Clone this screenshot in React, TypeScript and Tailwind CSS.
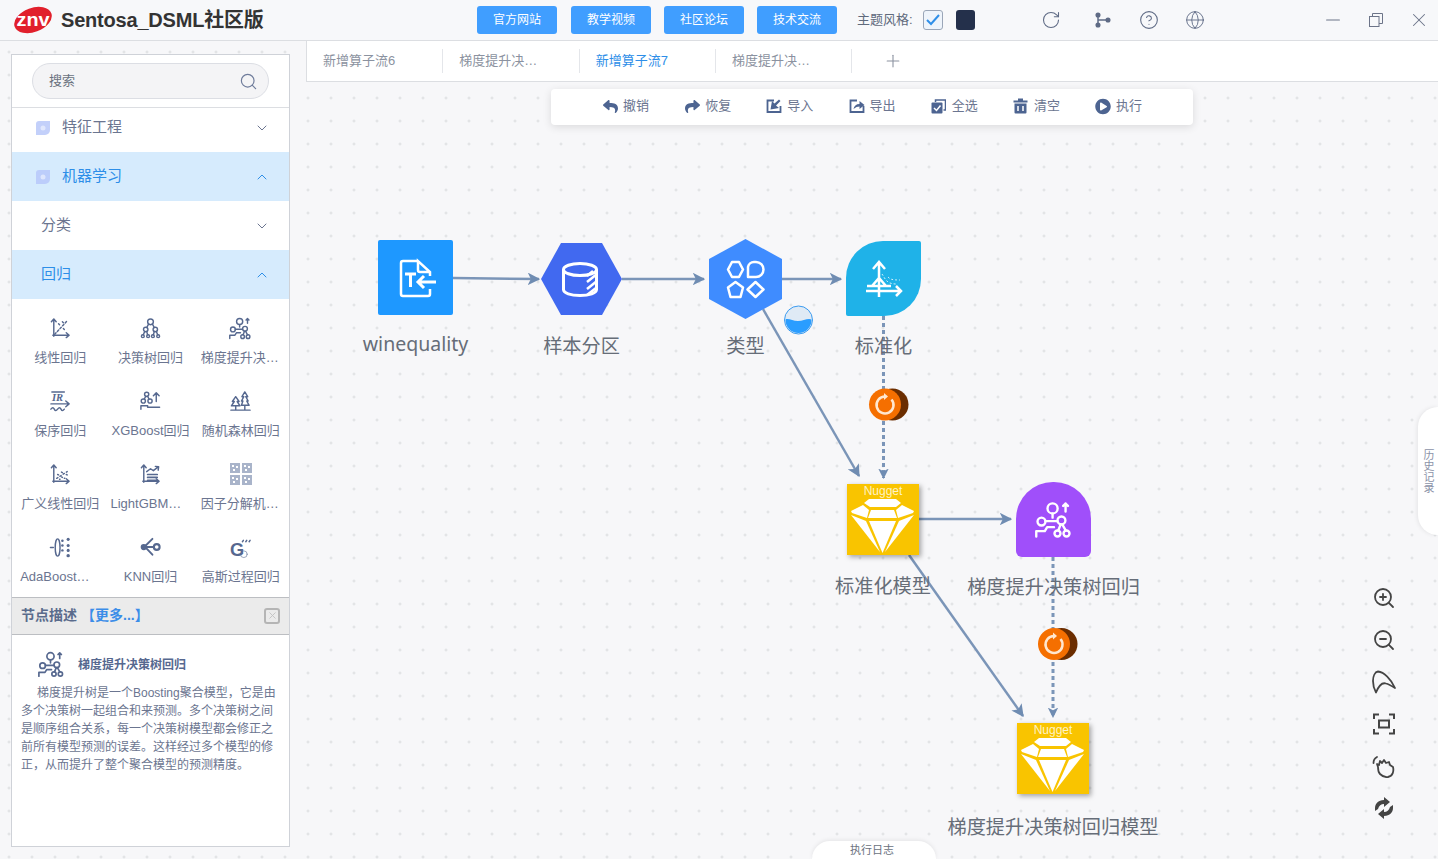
import type { ReactNode } from "react";
import { ChevronDown, ChevronUp, CircleHelp, Globe, Minus, Plus, RotateCw, Search, X, ZoomIn, ZoomOut } from "lucide-react";
import { FaPlayCircle, FaReply, FaShare } from "react-icons/fa";

function Glyph({ children, size = 24 }: { children: ReactNode; size?: number }) {
    return (
        <svg width={size} height={size} viewBox="0 0 24 24" fill="none" stroke="currentColor" strokeWidth="1.5" strokeLinecap="round" strokeLinejoin="round">
            {children}
        </svg>
    );
}

const Axes = () => <path d="M5 2v18M2.500 5 5 2l2.500 3M4 19h17M18 16.500l3 2.500-3 2.500" />;

const GbdtPaths = () => (
    <>
        <circle cx="11.100" cy="4.700" r="3.200" />
        <circle cx="4.100" cy="13" r="2.500" />
        <circle cx="16.700" cy="12.300" r="2.500" />
        <circle cx="14.200" cy="20.500" r="1.900" />
        <circle cx="19.900" cy="20.500" r="1.900" />
        <path d="M6.600 12.700h7.600M11.100 8v2.500M16.200 14.800l-1.500 3.800M17.200 14.800l2.200 3.800M19.300 6.600V1.600M17.800 3.100l1.500-1.500 1.500 1.500M.8 22.400v-3.400h5.400l1.500-2.500H12" />
    </>
);

const gridIcons: Record<string, ReactNode> = {
    linear: (
        <>
            <Axes />
            <path d="M6 18 19 4" strokeDasharray="2 2" />
            <path d="M10 7l1 1M15 12l1 1M14 5l1 1" />
        </>
    ),
    tree: (
        <>
            <circle cx="12" cy="5" r="3" />
            <circle cx="7" cy="13" r="2.300" />
            <circle cx="17" cy="13" r="2.300" />
            <circle cx="4" cy="20" r="1.500" />
            <circle cx="9.500" cy="20" r="1.500" />
            <circle cx="14.500" cy="20" r="1.500" />
            <circle cx="20" cy="20" r="1.500" />
            <path d="M10 7.500 8 11M14 7.500l2 3.500M6 15l-1.500 3.500M8 15l1 3.500M16 15l-1 3.500M18 15l1.500 3.500" />
        </>
    ),
    gbdt: <GbdtPaths />,
    isotonic: (
        <>
            <text x="3" y="11" fontSize="11" fontStyle="italic" fontWeight="700" fill="currentColor" stroke="none" fontFamily="Liberation Serif, serif">IR</text>
            <path d="M3 2h13M2 14.500h18M17.500 11.500l3.500 3-3.500 3M2 20c1.500-2 2.500-2 3.500 0s2 2 3.500 0 2.500-2 3.500 0 2 2 3.500 0" />
        </>
    ),
    xgboost: (
        <>
            <circle cx="8" cy="4.500" r="2.200" />
            <circle cx="4.500" cy="11.500" r="2.200" />
            <circle cx="11.500" cy="11.500" r="2.200" />
            <path d="M7 6.500 5.500 9.500M9 6.500l1.500 3M18 12V3M15 6l3-3 3 3M2 20v-3.500h7V18h12.500" />
        </>
    ),
    forest: <path d="M7 7 3.500 12H5.500L2.500 16.500H11.500L8.500 12H10.500ZM7 16.500V21M16.500 2 13.500 7H15.500L13 11.500H14.500L13 16H21L18.500 11.500H20L17.500 7H19.500ZM16.500 16V21M2 21H22" />,
    glm: (
        <>
            <Axes />
            <path d="M8 16l11-7" strokeDasharray="1.500 2.500" />
            <path d="M9 12l1 .5M13 14.500l1 .5M13 9.500l1 .5M18 12l1 .5M11 17h.5M16 16h.5" />
        </>
    ),
    lightgbm: (
        <>
            <Axes />
            <path d="M9 12h10M9 15h10M9 18h10" strokeWidth="1.800" />
            <path d="M8 9l4-3 3 2 5-4M17 3.500l3.500.5-.5 3.500" />
        </>
    ),
    ada: (
        <>
            <ellipse cx="9" cy="12" rx="2.500" ry="9" />
            <path d="M1.500 12h3" />
            <g fill="currentColor" stroke="none">
                <circle cx="14" cy="5" r="1.300" />
                <circle cx="20" cy="3.500" r="1.600" />
                <circle cx="14" cy="10" r="1.300" />
                <circle cx="20" cy="10" r="1.600" />
                <circle cx="14" cy="15" r="1.300" />
                <circle cx="20" cy="15" r="1.600" />
                <circle cx="20" cy="20.500" r="1.800" />
            </g>
        </>
    ),
    knn: (
        <>
            <path d="M14 3 6 11l8 8.500M8 11.500h7" strokeWidth="2" />
            <circle cx="5" cy="11.500" r="2.500" fill="currentColor" />
            <circle cx="18.500" cy="11.500" r="3" strokeWidth="2.200" />
        </>
    ),
    gauss: (
        <>
            <text x="1" y="21" fontSize="19" fontWeight="700" fill="currentColor" stroke="none" fontFamily="Liberation Sans, sans-serif">G</text>
            <path d="M14 6l1-1.500M17.500 6l1-1.500M21 6l1-1.500" />
            <circle cx="15.500" cy="19" r="3.500" strokeWidth="1" opacity="0.600" />
        </>
    ),
};

function FactorIcon() {
    return (
        <svg width="22" height="22" viewBox="0 0 22 22" className="text-[#a9b4ca]">
            {[0, 12].map((x) =>
                [0, 12].map((y) => (
                    <g key={`${x}-${y}`}>
                        <rect x={x} y={y} width="10" height="10" fill="currentColor" />
                        <rect x={x + 2} y={y + 2} width="2" height="2" fill="#fff" />
                        <rect x={x + 6} y={y + 3} width="2" height="2" fill="#fff" />
                        <rect x={x + 3} y={y + 6} width="2" height="2" fill="#fff" />
                    </g>
                ))
            )}
        </svg>
    );
}

const models = [
    { key: "linear", label: "线性回归" },
    { key: "tree", label: "决策树回归" },
    { key: "gbdt", label: "梯度提升决…" },
    { key: "isotonic", label: "保序回归" },
    { key: "xgboost", label: "XGBoost回归" },
    { key: "forest", label: "随机森林回归" },
    { key: "glm", label: "广义线性回归" },
    { key: "lightgbm", label: "LightGBM…" },
    { key: "factor", label: "因子分解机…" },
    { key: "ada", label: "AdaBoost…" },
    { key: "knn", label: "KNN回归" },
    { key: "gauss", label: "高斯过程回归" },
];

function NavIcon({ className }: { className: string }) {
    return (
        <svg width="14" height="14" viewBox="0 0 14 14" className={className}>
            <path d="M3 0h11v9a5 5 0 0 1-5 5H0V3a3 3 0 0 1 3-3Z" fill="currentColor" />
            <circle cx="7" cy="7" r="2.500" fill="#fff" opacity="0.500" />
        </svg>
    );
}

function Sidebar() {
    return (
        <div className="mt-[13px] ml-[11px] w-[279px] h-[793px] shrink-0 bg-white border border-[#cfd2d8] flex flex-col">
            <div className="h-[53px] shrink-0 border-b border-[#dcdee2] flex items-center px-[20px]">
                <div className="w-[237px] h-[36px] rounded-full bg-[#f4f4f6] border border-[#dcdee4] flex items-center justify-between pl-[16px] pr-[10px]">
                    <span className="text-[13px] text-[#6b7280]">搜索</span>
                    <Search size={19} strokeWidth={1.5} className="text-[#6f7c9b]" />
                </div>
            </div>
            <div className="h-[44px] shrink-0 flex items-center pb-[5px] pl-[24px] pr-[19px] text-[15px] text-[#6b7590]">
                <NavIcon className="text-[#c3d0fa]" />
                <span className="ml-[12px] flex-1">特征工程</span>
                <ChevronDown size={16} strokeWidth={1.5} />
            </div>
            <div className="h-[49px] shrink-0 flex items-center pl-[24px] pr-[19px] text-[15px] text-[#2d8ee8] bg-[#d6ebfd]">
                <NavIcon className="text-[#bccdfb]" />
                <span className="ml-[12px] flex-1">机器学习</span>
                <ChevronUp size={16} strokeWidth={1.5} />
            </div>
            <div className="h-[49px] shrink-0 flex items-center justify-between pl-[29px] pr-[19px] text-[15px] text-[#6b7590]">
                <span>分类</span>
                <ChevronDown size={16} strokeWidth={1.5} />
            </div>
            <div className="h-[49px] shrink-0 flex items-center justify-between pl-[29px] pr-[19px] text-[15px] text-[#2d8ee8] bg-[#d6ebfd]">
                <span>回归</span>
                <ChevronUp size={16} strokeWidth={1.5} />
            </div>
            <div className="h-[298px] shrink-0 grid grid-cols-3 grid-rows-[repeat(4,73px)] px-[3px]">
                {models.map((m) => (
                    <div key={m.key} className="flex flex-col items-center pt-[17px] text-[#56688f]">
                        <div className="h-[24px] flex items-center justify-center">
                            {m.key === "factor" ? <FactorIcon /> : <Glyph size={23}>{gridIcons[m.key]}</Glyph>}
                        </div>
                        <div className={m.label.includes("…") ? "mt-[9px] w-[80px] whitespace-nowrap text-left text-[13px] leading-[18px] text-[#6b7590]" : "mt-[9px] w-[80px] whitespace-nowrap text-center text-[13px] leading-[18px] text-[#6b7590]"}>{m.label}</div>
                    </div>
                ))}
            </div>
            <div className="h-[38px] shrink-0 bg-[#ebebeb] border-y border-[#bcbec2] flex items-center justify-between pb-[1px] pl-[9px] pr-[9px] text-[14px] font-bold">
                <div>
                    <span className="text-[#5a6b8c]">节点描述</span>
                    <span className="ml-[4px] text-[#3b8de8]">【更多...】</span>
                </div>
                <div className="w-[16px] h-[16px] rounded-[3px] border-2 border-[#b5b5b5] flex items-center justify-center text-[#c2c2c2]">
                    <X size={11} strokeWidth={2} />
                </div>
            </div>
            <div className="flex-1 pl-[9px] pr-[12px]">
                <div className="flex items-center pt-[16px] pl-[17px] text-[#56688f]">
                    <Glyph size={27}>
                        <GbdtPaths />
                    </Glyph>
                    <span className="ml-[13px] text-[12px] font-bold">梯度提升决策树回归</span>
                </div>
                <p className="mt-[6px] text-[12px] leading-[18px] text-[#6b7590] indent-[16px]">
                    梯度提升树是一个Boosting聚合模型，它是由多个决策树一起组合和来预测。多个决策树之间是顺序组合关系，每一个决策树模型都会修正之前所有模型预测的误差。这样经过多个模型的修正，从而提升了整个聚合模型的预测精度。
                </p>
            </div>
        </div>
    );
}

const linkButtons = ["官方网站", "教学视频", "社区论坛", "技术交流"];

function Header() {
    return (
        <div className="h-[41px] shrink-0 bg-[#f7f8fa] border-b border-[#dcdee2] flex items-center">
            <div className="w-[477px] shrink-0 flex items-center pl-[14px]">
                <svg width="38" height="28" viewBox="0 0 38 28">
                    <ellipse cx="19" cy="14" rx="19.500" ry="12" transform="rotate(-20 19 14)" fill="#e1202c" />
                    <text x="2.500" y="20" fontSize="18" fontWeight="700" fill="#fff" textLength="33" lengthAdjust="spacingAndGlyphs" fontFamily="Liberation Sans, sans-serif">znv</text>
                </svg>
                <span className="ml-[9px] text-[20px] font-bold tracking-[-0.2px] text-[#333]">Sentosa_DSML社区版</span>
            </div>
            <div className="flex gap-[13px]">
                {linkButtons.map((b) => (
                    <div key={b} className="w-[80px] h-[28px] rounded-[3px] bg-[#409eff] text-white text-[12px] first:mr-[1px] flex items-center justify-center">
                        {b}
                    </div>
                ))}
            </div>
            <span className="ml-[20px] w-[66px] shrink-0 text-[13px] text-[#606a7c]">主题风格:</span>
            <div className="w-[20px] h-[20px] rounded-[3px] border border-[#9aa6b8] bg-[#eef4fb] flex items-center justify-center">
                <svg width="14" height="12" viewBox="0 0 14 12" fill="none" stroke="#2f8fe8" strokeWidth="2"><path d="M1 6l4 4 8-9" /></svg>
            </div>
            <div className="ml-[13px] w-[19px] h-[20px] rounded-[3px] bg-[#24304b]" />
            <RotateCw size={20} strokeWidth={1.3} className="ml-[66px] text-[#5f6b85]" />
            <div className="ml-[32px] flex items-center gap-[26px] text-[#5f6b85]">
                <svg width="20" height="20" viewBox="0 0 20 20" fill="currentColor" stroke="currentColor" strokeWidth="1.500">
                    <circle cx="5" cy="5" r="1.800" />
                    <circle cx="5" cy="15" r="1.800" />
                    <circle cx="15" cy="10" r="1.800" />
                    <path d="M5 5v10M5 10h10" fill="none" />
                </svg>
                <CircleHelp size={20} strokeWidth={1.3} />
                <Globe size={20} strokeWidth={1.1} />
            </div>
            <div className="ml-auto flex items-center gap-[25px] pr-[8px] text-[#6c7488]">
                <Minus size={22} strokeWidth={1.1} />
                <svg width="14" height="14" viewBox="0 0 14 14" fill="none" stroke="currentColor"><rect x="0.500" y="3.500" width="9.500" height="10" /><path d="M3.500 3.500V.5h10V10.500H10" /></svg>
                <X size={22} strokeWidth={1.1} />
            </div>
        </div>
    );
}

const tabs = [
    { label: "新增算子流6", active: false },
    { label: "梯度提升决…", active: false },
    { label: "新增算子流7", active: true },
    { label: "梯度提升决…", active: false },
];

function Tabs() {
    return (
        <div className="h-[41px] shrink-0 bg-white border-l border-b border-[#dcdee2] flex items-center">
            {tabs.map((t, i) => (
                <div key={i} className="w-[136.330px] h-[24px] shrink-0 border-r border-[#e4e6ea] pl-[16px] flex items-center">
                    <span className={t.active ? "whitespace-nowrap text-[13px] text-[#2d8ee8]" : "whitespace-nowrap text-[13px] text-[#8b92a0]"}>{t.label}</span>
                </div>
            ))}
            <Plus size={20} strokeWidth={1.3} className="ml-[31px] text-[#8b92a0]" />
        </div>
    );
}

function ImportIcon({ out }: { out?: boolean }) {
    return (
        <svg width="16" height="16" viewBox="0 0 16 16">
            <path d="M8 2.500H1.500v11.500h13V8" fill="none" stroke="currentColor" strokeWidth="1.800" />
            {out ? <path d="M4.500 11c.5-3 2.500-5 6-5V3l5 4-5 4V8.500c-2 0-4 .8-6 2.500Z" fill="currentColor" /> : <path d="M14.500 3 10 7.500 13 10l-8.500 1.500L6 3l2.500 2.500L13 1.500Z" fill="currentColor" />}
        </svg>
    );
}

const toolItems: { label: string; icon: ReactNode }[] = [
    { label: "撤销", icon: <FaReply size={15} /> },
    { label: "恢复", icon: <FaShare size={15} /> },
    { label: "导入", icon: <ImportIcon /> },
    { label: "导出", icon: <ImportIcon out /> },
    {
        label: "全选",
        icon: (
            <svg width="15" height="15" viewBox="0 0 15 15">
                <path d="M4.500 3V1h10v10h-2" fill="none" stroke="currentColor" strokeWidth="1.500" />
                <rect x="0.500" y="3.500" width="11" height="11" rx="1" fill="currentColor" />
                <path d="M3 9l2.500 2.500L9.500 6.500" fill="none" stroke="#fff" strokeWidth="1.500" />
            </svg>
        ),
    },
    {
        label: "清空",
        icon: (
            <svg width="15" height="16" viewBox="0 0 15 16" fill="currentColor">
                <path d="M0.500 2.500h14V4.500h-14ZM5 0.500h5v2H5ZM1.500 5.500h12V14.500a1 1 0 0 1-1 1h-10a1 1 0 0 1-1-1Z" />
                <path d="M5 8v5M10 8v5" stroke="#fff" strokeWidth="1.500" />
            </svg>
        ),
    },
    { label: "执行", icon: <FaPlayCircle size={17} /> },
];

function Toolbar() {
    return (
        <div className="absolute left-[245px] top-[7px] w-[642px] h-[36px] bg-white rounded-[4px] shadow-[0_2px_8px_rgba(0,0,0,0.12)] flex items-center gap-[35.200px] pl-[51px] pb-[2px] text-[#4d6491]">
            {toolItems.map((t) => (
                <div key={t.label} className="w-[47px] flex items-center justify-between">
                    <span className="w-[16px] flex justify-center">{t.icon}</span>
                    <span className="text-[13px] text-[#6b7590]">{t.label}</span>
                </div>
            ))}
        </div>
    );
}

function GemBox() {
    return (
        <div className="w-[72px] h-[71px] bg-[#f9c400] shadow-[2px_2px_5px_rgba(0,0,0,0.35)] relative flex flex-col items-center">
            <span className="text-[12px] leading-[14px] text-[#fff3c4]">Nugget</span>
            <svg width="72" height="71" viewBox="0 0 72 71" fill="#fff" className="absolute left-0 top-0">
                <polygon points="22,15 49,15 54,19 49,23 23,23 17,19" />
                <polygon points="4,27 16,21 22,26 20,34 5,29" />
                <polygon points="24,26 47,26 50,34 21,34" />
                <polygon points="67,27 55,21 49,26 51,34 66,29" />
                <polygon points="22,37 49,37 35.500,69" />
                <polygon points="4,31 19,37 33,68" />
                <polygon points="67,31 52,37 38,68" />
            </svg>
        </div>
    );
}

function NodeLabel({ children, className }: { children: ReactNode; className: string }) {
    return <div className={`whitespace-nowrap text-[19.200px] leading-[28px] text-[#666d78] ${className}`}>{children}</div>;
}

function Graph() {
    return (
        <svg viewBox="306 82 1132 777" className="absolute inset-0 w-full h-full" fill="none">
            <defs>
                <marker id="arrow" viewBox="0 0 10 10" refX="9" refY="5" markerWidth="5" markerHeight="5" orient="auto" markerUnits="strokeWidth">
                    <path d="M0 0 10 5 0 10 2.500 5Z" fill="#6f8cb2" />
                </marker>
                <marker id="arrowSmall" viewBox="0 0 10 10" refX="9" refY="5" markerWidth="3.500" markerHeight="3.500" orient="auto" markerUnits="strokeWidth">
                    <path d="M0 0 10 5 0 10 2.500 5Z" fill="#6f8cb2" />
                </marker>
                <clipPath id="ball">
                    <circle cx="798.500" cy="320" r="13" />
                </clipPath>
            </defs>
            <g stroke="#7b95b8" strokeWidth="2.500">
                <path d="M453 278 539 279" markerEnd="url(#arrow)" />
                <path d="M622 279H704" markerEnd="url(#arrow)" />
                <path d="M782 279H841" markerEnd="url(#arrow)" />
                <path d="M763 309 859 476" markerEnd="url(#arrow)" />
                <path d="M919 519H1011" markerEnd="url(#arrow)" />
                <path d="M909 555 1023 716" markerEnd="url(#arrow)" />
                <path d="M883.500 316V478" strokeWidth="3" strokeDasharray="4 3" markerEnd="url(#arrowSmall)" />
                <path d="M1053 557V717" strokeWidth="3" strokeDasharray="4 3" markerEnd="url(#arrowSmall)" />
            </g>
            <circle cx="798.500" cy="320" r="14" fill="#dfeaf5" stroke="#3b9bf0" />
            <path d="M784 320c4-3 8 1 14 1s10-4 15-1v15h-29Z" fill="#2a9dff" clipPath="url(#ball)" />
            {[
                { x: 885, y: 404.500 },
                { x: 1054, y: 644 },
            ].map((p) => (
                <g key={p.x}>
                    <circle cx={p.x + 7.500} cy={p.y} r="16" fill="#6b2d00" />
                    <circle cx={p.x} cy={p.y} r="16" fill="#f56f00" />
                    <path d={`M${p.x + 6.500} ${p.y - 5}a8.500 8.500 0 1 1-6.500-3`} stroke="#ffe7cf" strokeWidth="2.500" />
                    <path d={`M${p.x - 1} ${p.y - 11.500}l4 3.500-4 3.500Z`} fill="#ffe7cf" />
                </g>
            ))}
        </svg>
    );
}

function Canvas() {
    return (
        <div className="flex-1 relative">
            <Graph />

            <div className="absolute left-[9px] top-[158px] w-[201px] flex flex-col items-center">
                <div className="w-[75px] h-[75px] rounded-[2px] bg-[#1e98ff]">
                    <svg width="75" height="75" viewBox="0 0 75 75" fill="none" stroke="#fff" strokeWidth="2.500">
                        <path d="M40 21H25a2 2 0 0 0-2 2v31a2 2 0 0 0 2 2h25a2 2 0 0 0 2-2v-5M52 36V32L40 21v9a2 2 0 0 0 2 2h10" />
                        <path d="M27 34h11M32.500 34v13" strokeWidth="3" />
                        <path d="M58 42H41M46 36l-6 6 6 6" strokeWidth="3" />
                    </svg>
                </div>
                <div className="mt-[15px] whitespace-nowrap text-[19.500px] leading-[28px] text-[#666d78] font-['Noto_Sans',sans-serif]">winequality</div>
            </div>

            <div className="absolute left-[125px] top-[161px] w-[301px] flex flex-col items-center">
                <svg width="81" height="72" viewBox="0 0 81 72">
                    <polygon points="20,0 61,0 81,36 61,72 20,72 0,36" fill="#4169f0" />
                    <g fill="none" stroke="#fff" strokeWidth="3">
                        <ellipse cx="39" cy="26.500" rx="16.500" ry="6" />
                        <path d="M22.500 26.500v20c0 3.500 7 6 16.500 6s16.500-2.500 16.500-6v-20" />
                        <path d="M46 39l10-8M46 46l10-8M46 52l9-7M46 33l6-5" strokeWidth="2.500" />
                    </g>
                </svg>
                <NodeLabel className="mt-[18px]">样本分区</NodeLabel>
            </div>

            <div className="absolute left-[289px] top-[157px] w-[301px] flex flex-col items-center">
                <svg width="73" height="80" viewBox="0 0 73 80">
                    <polygon points="36.500,0 73,20 73,60 36.500,80 0,60 0,20" fill="#3f8cff" />
                    <g fill="none" stroke="#fff" strokeWidth="2.500" strokeLinejoin="round">
                        <polygon points="23,23 30,23 34,30.500 30,38 23,38 19,30.500" />
                        <path d="M39 38V28a6 6 0 0 1 6-5h2a7.500 7.500 0 0 1 0 15Z" />
                        <polygon points="26.500,43 34,48.500 31.500,58 21.500,58 19,48.500" />
                        <polygon points="46.500,43 54.500,50.500 46.500,58 38.500,50.500" />
                    </g>
                </svg>
                <NodeLabel className="mt-[14px]">类型</NodeLabel>
            </div>

            <div className="absolute left-[427px] top-[159px] w-[301px] flex flex-col items-center">
                <div className="w-[75px] h-[75px] rounded-tl-[37px] rounded-br-[37px] rounded-tr-[2px] rounded-bl-[2px] bg-[#1fb2e8]">
                    <svg width="75" height="75" viewBox="0 0 75 75" fill="none" stroke="#fff" strokeWidth="2.500">
                        <path d="M33 21V56M27 28l6-7 6 7M20 50H55M50 45l5 5-5 5M21 45h24M26 45l7-8 7 8" />
                        <path d="M36 33c3 4 4 10 14 10M42 36c2 2 3 3 12 3" strokeWidth="0.800" strokeDasharray="2 2" />
                    </svg>
                </div>
                <NodeLabel className="mt-[17px]">标准化</NodeLabel>
            </div>

            <div className="absolute left-[427px] top-[402px] w-[300px] flex flex-col items-center">
                <GemBox />
                <NodeLabel className="mt-[18px]">标准化模型</NodeLabel>
            </div>

            <div className="absolute left-[597px] top-[400px] w-[301px] flex flex-col items-center">
                <div className="w-[75px] h-[75px] rounded-t-[37px] rounded-b-[6px] bg-[#a04ffa] flex items-center justify-center text-white">
                    <Glyph size={38}>
                        <GbdtPaths />
                    </Glyph>
                </div>
                <NodeLabel className="mt-[17px]">梯度提升决策树回归</NodeLabel>
            </div>

            <div className="absolute left-[597px] top-[641px] w-[300px] flex flex-col items-center">
                <GemBox />
                <NodeLabel className="mt-[20px]">梯度提升决策树回归模型</NodeLabel>
            </div>

            <Toolbar />

            <div className="absolute right-[0px] top-[325px] w-[20px] h-[128px] bg-white rounded-l-[20px] shadow-[-1px_0_4px_rgba(0,0,0,0.08)] flex items-center justify-center">
                <span className="[writing-mode:vertical-rl] text-[11px] leading-[12px] text-[#8b93a8]">历史记录</span>
            </div>

            <div className="absolute left-[506px] bottom-0 w-[124px] h-[18px] pr-[4px] bg-white rounded-t-[18px] shadow-[0_-1px_4px_rgba(0,0,0,0.08)] flex items-center justify-center text-[11px] text-[#6b7280]">
                执行日志
            </div>

            <div className="absolute left-[1066px] top-[504px] flex flex-col items-center gap-[18px] text-[#444]">
                <ZoomIn size={24} strokeWidth={1.8} />
                <ZoomOut size={24} strokeWidth={1.8} />
                <svg width="24" height="24" viewBox="0 0 24 24" fill="none" stroke="currentColor" strokeWidth="1.800" strokeLinejoin="round">
                    <path d="M1 11C1 6 3 2 6 1.500C12 2 19 9 23 18C19 15.500 16 14 14 13.500C11 12.500 7 15 4 22.500C2 19 1 15 1 11Z" />
                </svg>
                <svg width="24" height="24" viewBox="0 0 24 24" fill="none" stroke="currentColor" strokeWidth="2">
                    <path d="M2 7V2.500h5M17 2.500h5V7M2 17v4.500h5M22 17v4.500h-5" />
                    <rect x="7" y="8.500" width="10" height="7" />
                </svg>
                <svg width="24" height="24" viewBox="0 0 24 24" fill="none" stroke="currentColor" strokeWidth="1.800" strokeLinecap="round" strokeLinejoin="round">
                    <path d="M8 20c-2-2-2-5-2-7l-1-3 2 1 1-4 2 2 2-3 2 3 3-1 1 3 3 2c1 4 0 9-5 10-3 .500-6-1-8-3Z" />
                    <path d="M1.500 9C1.500 6 3 4 5 3" />
                </svg>
                <svg width="24" height="24" viewBox="0 0 24 24" fill="currentColor">
                    <path d="M3 12c0-4 3-8 9-8V1l6 5-6 5V8c-3 0-5 1.500-6 5L3 15Z" />
                    <path d="M21 12c0 4-3 8-9 8v3l-6-5 6-5v3c3 0 5-1.500 6-5l3-2Z" />
                </svg>
            </div>
        </div>
    );
}

export default function App() {
    return (
        <div className="w-[1438px] h-[859px] overflow-hidden flex flex-col bg-[#f7f7f9] font-['Liberation_Sans','Noto_Sans_CJK_SC',sans-serif]">
            <Header />
            <div className="flex-1 flex bg-[radial-gradient(circle,#dcdde0_1px,transparent_1.2px)] bg-[size:23px_23px] bg-[position:-2.500px_-0.500px]">
                <Sidebar />
                <div className="ml-[16px] flex-1 flex flex-col">
                    <Tabs />
                    <Canvas />
                </div>
            </div>
        </div>
    );
}
